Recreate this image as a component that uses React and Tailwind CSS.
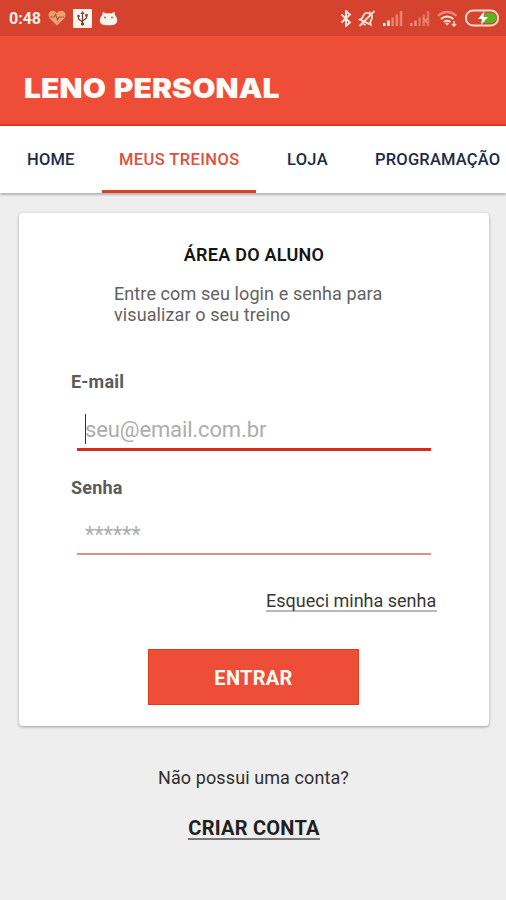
const tabs = [
  { label: "HOME", box: "w-[102px] pl-[27px]", text: "text-[#1c2b49] tracking-[0.2px]" },
  { label: "MEUS TREINOS", box: "w-[154px] pl-[17px] border-[#dc3f28]", text: "text-[#e0503e] tracking-[0.4px]", active: true },
  { label: "LOJA", box: "w-[94px] pl-[31px]", text: "text-[#1c2b49] tracking-[0.3px]" },
  { label: "PROGRAMAÇÃO", box: "w-[156px] pl-[25px]", text: "text-[#1c2b49] tracking-[0.2px]" },
];

function Heart() {
  return (
    <svg width="18" height="16" viewBox="0 0 18 16">
      <path d="M9 15.5 2 8.7C-1 5 1 .8 4.6.8 6.8.8 8.3 2 9 3.4 9.7 2 11.2.8 13.4.8 17 .8 19 5 16 8.7Z" fill="#efa06f" />
      <path d="M2 7h4l1.5-2.5L9.5 10 11 7h5" fill="none" stroke="#b55840" strokeWidth="1.2" />
    </svg>
  );
}

function Usb() {
  return (
    <svg width="19" height="19" viewBox="0 0 19 19">
      <rect width="19" height="19" rx="1" fill="#fff3ec" />
      <path d="M9.5 16V4M9.5 13 5.5 10V7M9.5 12l4-3V6" fill="none" stroke="#70483d" strokeWidth="1.3" />
      <path d="m7.5 5 2-3 2 3Z" fill="#70483d" />
      <circle cx="9.5" cy="15" r="1.7" fill="#70483d" />
      <circle cx="5.5" cy="7" r="1.3" fill="#70483d" />
      <path d="M12.3 5h2.4v2.4h-2.4Z" fill="#70483d" />
    </svg>
  );
}

function Cat() {
  return (
    <svg width="19" height="15" viewBox="0 0 19 15">
      <path d="M3.2 4 4 .7 7 2.6Q10 2 12.5 2.6L15.4.7 16 4Q18 6 18.2 9c.2 4-3 5.3-8.7 5.3S.5 13 .8 9Q1 6 3.2 4Z" fill="#fff3ec" />
      <circle cx="6" cy="6.5" r=".9" fill="#d5452f" />
      <circle cx="13" cy="6.5" r=".9" fill="#d5452f" />
    </svg>
  );
}

function Bluetooth() {
  return (
    <svg width="12" height="17" viewBox="0 0 12 17">
      <path d="m1.5 4.5 8.5 8-4 3.5V1l4 3.5-8.5 8" fill="none" stroke="#ffe6dc" strokeWidth="1.9" />
    </svg>
  );
}

function Muted() {
  return (
    <svg width="18" height="17" viewBox="0 0 18 17" fill="none" stroke="#ffe0d4" strokeWidth="1.8">
      <g transform="rotate(25 9 8.5)">
        <path d="M3 12.500h12l-1.500-2V7.500C13.500 4.500 11.500 3 9 3S4.500 4.500 4.500 7.500v3ZM7.500 15h3M9 1v2" />
      </g>
      <path d="M1.500 16 16.500 1" />
    </svg>
  );
}

function Signal({ strong }) {
  return (
    <svg width="20" height="15" viewBox="0 0 20 15">
      <path d="M0 12h2.500v3H0ZM4.200 9.500h2.500V15H4.200Z" fill={strong ? "#fff0e8" : "#e88b77"} />
      <path d="M8.400 6.500h2.500V15H8.400ZM12.600 3.500h2.500V15h-2.500ZM16.800 0h2.500v15h-2.500Z" fill={strong ? "#e98470" : "#e07461"} />
      {!strong && <path d="m13 7 5 5m0-5-5 5" stroke="#e88f7c" strokeWidth="1.300" />}
    </svg>
  );
}

function Wifi() {
  return (
    <svg width="21" height="17" viewBox="0 0 21 17" fill="none">
      <path d="M1 5.800Q10 -2 19.500 5.800" stroke="#ec8c79" strokeWidth="2" />
      <path d="M4 9q6-5 12.500 0M7 12q3.200-2.400 6.500 0" stroke="#ffe4d9" strokeWidth="2" />
      <path d="m10.200 15.500-2-2q2-1.500 4 0Z" fill="#ffe4d9" />
      <path d="m17 11v5m-2-2 2 2 2-2" stroke="#ffd4c5" strokeWidth="1.500" />
    </svg>
  );
}

function Battery() {
  return (
    <svg width="34" height="18" viewBox="0 0 34 18">
      <rect x="1" y="1.500" width="32" height="15" rx="7" fill="#d5452f" stroke="#ffd9cd" strokeWidth="1.900" />
      <path d="M20 4h6.500a5 5 0 0 1 0 10H17Z" fill="#57b51f" />
      <path d="M19.500 2 13 10h4l-1 6 7-8h-4.500Z" fill="#fff" />
    </svg>
  );
}

export default function App() {
  return (
    <div className="flex h-[900px] w-[506px] flex-col overflow-hidden bg-[#eeeeee] font-[Roboto,sans-serif]">
      <div className="flex h-9 shrink-0 items-center bg-[#d5432f] pl-[9px] pr-[7px]">
        <span className="w-[39px] whitespace-nowrap pt-px text-[16px] font-bold text-[#fff0ea]">0:48</span>
        <div className="flex items-center gap-[7px]"><Heart /><Usb /><Cat /></div>
        <div className="ml-auto flex items-center">
          <div className="mr-[6px]"><Bluetooth /></div>
          <div className="mr-[7px]"><Muted /></div>
          <div className="mr-[7px]"><Signal strong /></div>
          <div className="mr-[7px]"><Signal /></div>
          <div className="mr-[7px]"><Wifi /></div>
          <Battery />
        </div>
      </div>
      <header className="flex h-[90px] shrink-0 items-center border-b-2 border-[#d93c1b] bg-[#ee4d38] pl-6 pt-[16px]">
        <h1 className="origin-left scale-x-[1.13] whitespace-nowrap font-[Inter,sans-serif] text-[26.500px] font-black leading-none tracking-[0.1px] text-[#fffaf6] [word-spacing:1.5px]">LENO PERSONAL</h1>
      </header>
      <nav className="relative flex h-[67px] shrink-0 bg-white shadow-[0_2px_2px_rgba(0,0,0,0.23)]">
        {tabs.map((t) => (
          <div key={t.label} className={`${t.box} ${t.text} ${t.active ? "border-b-[3px]" : "border-b-[3px] border-transparent"} flex shrink-0 items-center whitespace-nowrap pt-[5px] text-[16.500px] font-medium`}>
            {t.label}
          </div>
        ))}
      </nav>
      <main className="ml-[19px] mt-5 flex h-[513px] w-[470px] shrink-0 flex-col rounded-[4px] bg-white shadow-[0_1px_3px_rgba(0,0,0,0.35)]">
        <h2 className="mt-[31px] text-center text-[18px] font-semibold leading-[21px] tracking-[0.25px] text-[#151515]">ÁREA DO ALUNO</h2>
        <p className="ml-[95px] mt-[18px] whitespace-nowrap text-[18px] leading-[21px] tracking-[0.1px] text-[#626262]">
          Entre com seu login e senha para<br />visualizar o seu treino
        </p>
        <label className="ml-[52px] mt-[46px] text-[18px] font-bold leading-[21px] tracking-[0.2px] text-[#5b5b5b]">E-mail</label>
        <div className="ml-[58px] mt-[18px] flex h-[41px] w-[354px] items-center border-b-[3px] border-[#dc2818] pl-2 text-[22px] tracking-[-0.13px] text-[#adadad]">
          <span className="h-[30px] w-px shrink-0 bg-[#303030]" />
          <span className="-ml-px">seu@email.com.br</span>
        </div>
        <label className="ml-[52px] mt-[26px] text-[18px] font-bold leading-[21px] tracking-[0.2px] text-[#5b5b5b]">Senha</label>
        <div className="ml-[58px] mt-[21px] flex h-[36px] w-[354px] items-center border-b-2 border-[#df9282] pb-[4px] pl-2 text-[22px] tracking-[-0.2px] text-[#adadad]">******</div>
        <a className="ml-[247px] mt-[36px] w-[171px] whitespace-nowrap border-b-2 border-[#b8b8b8] text-[18px] leading-[19px] text-[#373737]">Esqueci minha senha</a>
        <button className="ml-[129px] mt-[37px] flex h-[56px] w-[211px] items-center justify-center border border-[#df3c1d] bg-[#ee4d38] pt-[1px] text-[20px] font-bold tracking-[0.3px] text-[#fffaf6]">ENTRAR</button>
      </main>
      <div className="mt-[41px] pl-px text-center text-[18px] leading-[21px] tracking-[0.1px] text-[#303030]">Não possui uma conta?</div>
      <a className="mx-auto mt-[30px] translate-x-px whitespace-nowrap border-b-2 border-[#777777] text-[20px] font-bold leading-[20px] tracking-[0.25px] text-[#202020]">CRIAR CONTA</a>
    </div>
  );
}
